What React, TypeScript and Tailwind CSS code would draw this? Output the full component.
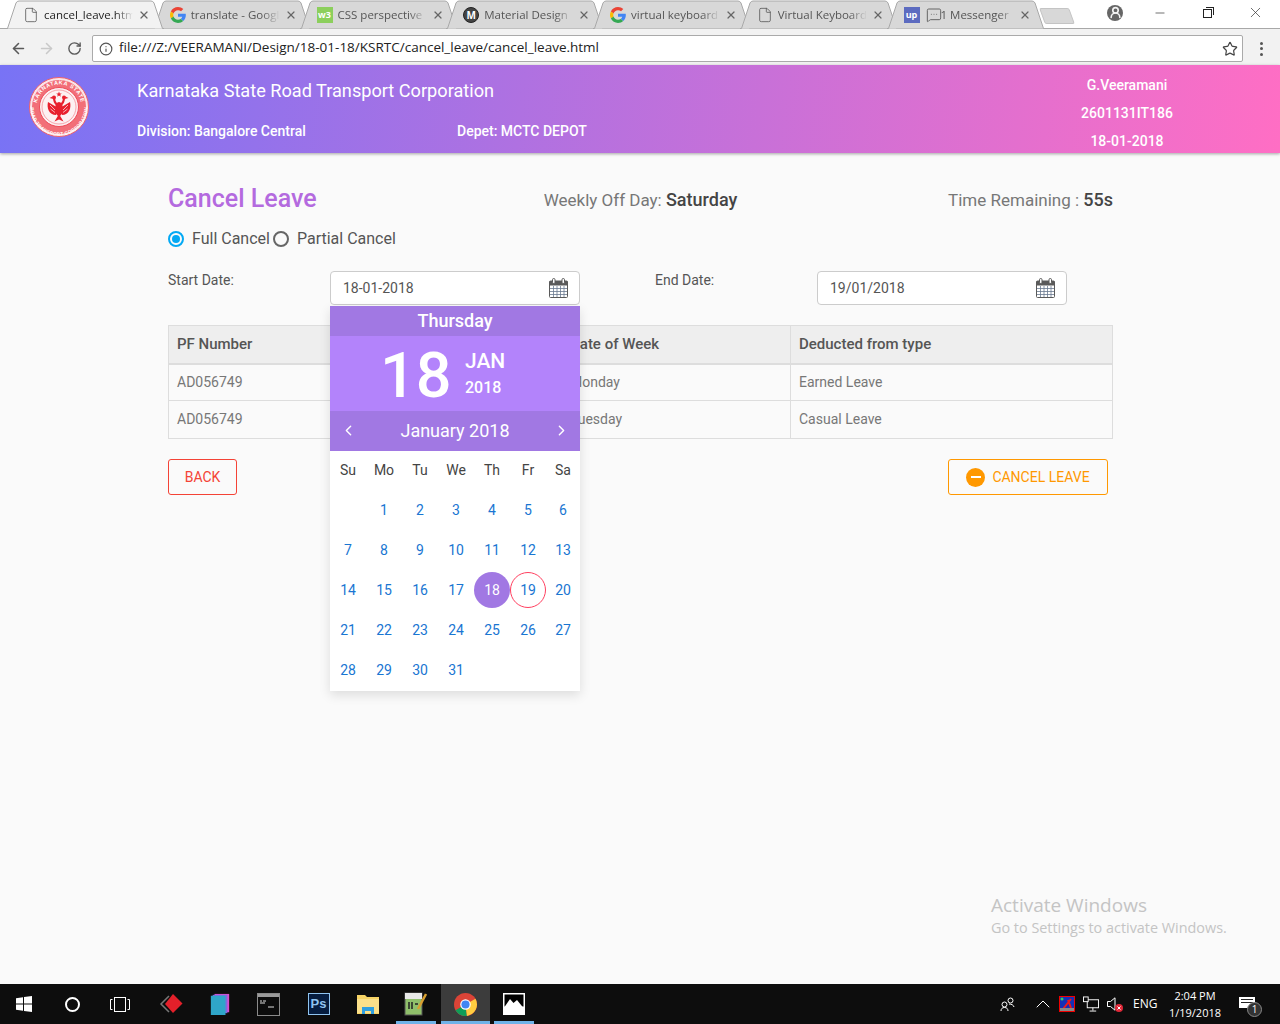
import { ArrowLeft, ArrowRight, ChevronLeft, ChevronRight, ChevronUp, File, Info, MessageSquareMore, Minus, RotateCw, Star, UserRound, X } from "lucide-react";

const UI_FONT = "font-['Open_Sans','Noto_Sans',sans-serif]";

const TABS = [
  { title: "cancel_leave.html", icon: "file", active: true },
  { title: "translate - Google", icon: "google" },
  { title: "CSS perspective", icon: "w3" },
  { title: "Material Design", icon: "material" },
  { title: "virtual keyboard", icon: "google" },
  { title: "Virtual Keyboard", icon: "file" },
  { title: "1 Messenger", icon: "up" },
];

const WEEK = ["Su", "Mo", "Tu", "We", "Th", "Fr", "Sa"];
const DAYS = [0, ...Array.from({ length: 31 }, (_, i) => i + 1)];

const ROWS = [
  { pf: "AD056749", day: "Monday", type: "Earned Leave", height: "h-[37px]" },
  { pf: "AD056749", day: "Tuesday", type: "Casual Leave", height: "h-[38px]" },
];

function GoogleIcon() {
  return (
    <svg width="16" height="16" viewBox="0 0 48 48" className="shrink-0">
      <path fill="#EA4335" d="M24 9.5c3.5 0 6.7 1.3 9.1 3.5l6.8-6.8C35.8 2.4 30.2 0 24 0 14.6 0 6.5 5.4 2.6 13.2l7.9 6.1C12.4 13.6 17.7 9.5 24 9.5z" />
      <path fill="#4285F4" d="M47.5 24.5c0-1.6-.1-3.1-.4-4.5H24v9h12.7c-.5 2.9-2.2 5.4-4.7 7.1l7.6 5.9c4.4-4.1 7.9-10.1 7.9-17.5z" />
      <path fill="#FBBC05" d="M10.5 28.7c-.5-1.4-.8-3-.8-4.7s.3-3.3.8-4.7l-7.9-6.1C.9 16.5 0 20.1 0 24s.9 7.5 2.6 10.8l7.9-6.1z" />
      <path fill="#34A853" d="M24 48c6.5 0 11.9-2.1 15.6-5.8L32 36.1c-2.1 1.4-4.8 2.3-8 2.3-6.3 0-11.6-4.2-13.5-9.8l-7.9 6.2C6.5 42.6 14.6 48 24 48z" />
    </svg>
  );
}

function TabIcon({ kind }: { kind: string }) {
  if (kind === "google") return <GoogleIcon />;
  if (kind === "file") return <File size={16} strokeWidth={1.2} className="shrink-0 text-[#555]" />;
  if (kind === "w3") {
    return <span className="w-4 h-4 shrink-0 bg-[#8ccf5c] text-white text-[9px] leading-4 text-center font-bold">w3</span>;
  }
  if (kind === "material") {
    return (
      <span className="w-4 h-4 shrink-0 rounded-full bg-[#444] border border-[#222] text-white text-[10px] leading-[14px] text-center font-bold">M</span>
    );
  }
  return (
    <>
      <span className="w-4 h-4 shrink-0 bg-[#5c6bc0] text-white text-[9px] leading-4 text-center font-bold">up</span>
      <MessageSquareMore size={16} strokeWidth={1.3} className="shrink-0 ml-[1px] -mr-[6px] text-[#555]" />
    </>
  );
}

function Tab({ title, icon, active }: { title: string; icon: string; active?: boolean }) {
  return (
    <div className={`relative w-[158px] h-[29px] shrink-0 -mr-[11.25px] ${active ? "z-10" : ""}`}>
      <svg width="158" height="29" className="absolute left-0 top-0">
        <path
          d="M0 28.5 L1.5 28.5 L10 3 Q11 1 13 1 L145 1 Q147 1 148 3 L156.5 28.5 L158 28.5"
          fill={active ? "#f2f2f2" : "#d8d8d8"}
          stroke="#a8a8a8"
        />
      </svg>
      <div className="relative flex items-center h-[29px] pl-[17px] pr-[14px] gap-[5px]">
        <TabIcon kind={icon} />
        <span className={`flex-1 overflow-hidden whitespace-nowrap text-[11.5px] [mask-image:linear-gradient(to_right,black_80%,transparent)] ${active ? "text-[#222]" : "text-[#555]"}`}>
          {title}
        </span>
        <X size={12} strokeWidth={2.4} className="shrink-0 text-[#666]" />
      </div>
    </div>
  );
}

function BrowserChrome() {
  return (
    <div className={`${UI_FONT} bg-[#f2f2f2]`}>
      <div className="relative h-[35px] bg-white pl-[6px] flex items-start">
        <div className="absolute left-0 right-0 top-[28px] h-[7px] bg-[#f2f2f2]" />
        <div className="absolute left-0 right-0 top-[28px] h-px bg-[#a8a8a8]" />
        {TABS.map((t, i) => (
          <Tab key={i} title={t.title} icon={t.icon} active={t.active} />
        ))}
        <div className="relative ml-[9px] mt-[8px] w-[30px] h-[16px] bg-[#d8d8d8] border border-[#c4c4c4] rounded-[2px] skew-x-[20deg]" />
        <div className="relative ml-auto flex items-center h-[28px] text-[#333]">
          <span className="w-[16px] h-[16px] mb-[3px] rounded-full bg-[#666] flex items-center justify-center overflow-hidden mr-[30px]">
            <UserRound size={13} strokeWidth={3} className="text-[#f3f3f3]" />
          </span>
          <Minus size={14} strokeWidth={1.2} className="mb-[3px] mr-[36px]" />
          <span className="relative w-[9px] h-[9px] border border-[#222] bg-white mb-[4px] mr-[35px] mt-[2px]">
            <span className="absolute -top-[3px] -right-[3px] w-[8px] h-[8px] border-t border-r border-[#222]" />
          </span>
          <X size={17} strokeWidth={1} className="mb-[4px] mr-[16px]" />
        </div>
      </div>
      <div className="h-[31px] flex items-center -mt-[1px] pb-[2px]">
        <ArrowLeft size={17} strokeWidth={2.2} className="ml-[10px] text-[#5a5a5a]" />
        <ArrowRight size={17} strokeWidth={2.2} className="ml-[11px] text-[#c9c9c9]" />
        <RotateCw size={15} strokeWidth={2.2} className="ml-[12px] text-[#5a5a5a]" />
        <div className="ml-[10px] w-[1151px] h-[27px] bg-white border border-[#aaa] rounded-[2px] flex items-center pl-[6px] pr-[4px]">
          <Info size={14} strokeWidth={2} className="text-[#555]" />
          <span className="ml-[6px] pb-[2px] text-[13.5px] text-[#222] whitespace-nowrap">file:///Z:/VEERAMANI/Design/18-01-18/KSRTC/cancel_leave/cancel_leave.html</span>
          <Star size={16} strokeWidth={1.8} className="ml-auto text-[#444]" />
        </div>
        <div className="ml-[17px] flex flex-col gap-[2.5px]">
          <span className="w-[3px] h-[3px] rounded-full bg-[#555]" />
          <span className="w-[3px] h-[3px] rounded-full bg-[#555]" />
          <span className="w-[3px] h-[3px] rounded-full bg-[#555]" />
        </div>
      </div>
    </div>
  );
}

function Seal() {
  return (
    <svg width="60" height="60" viewBox="0 0 60 60" className="shrink-0">
      <circle cx="30" cy="30" r="29.5" fill="#fbe4e6" stroke="#f0606a" strokeWidth="1" />
      <circle cx="30" cy="30" r="27" fill="#f26f78" />
      <circle cx="30" cy="30" r="19.5" fill="#fdf1f2" stroke="#ee4b58" strokeWidth="1" />
      <circle cx="30" cy="30" r="17" fill="none" stroke="#f26f78" strokeWidth="0.6" />
      <defs>
        <path id="sealTop" d="M7.5 30 A22.5 22.5 0 0 1 52.5 30" />
        <path id="sealBottom" d="M4.5 30 A25.5 25.5 0 0 0 55.5 30" />
      </defs>
      <text fontSize="5.5" fontWeight="700" fill="#fff" fontFamily="Liberation Sans, sans-serif" letterSpacing="0.6">
        <textPath href="#sealTop" startOffset="50%" textAnchor="middle">KARNATAKA STATE</textPath>
      </text>
      <text fontSize="4.6" fontWeight="700" fill="#fff" fontFamily="Liberation Sans, sans-serif" dominantBaseline="hanging">
        <textPath href="#sealBottom" startOffset="50%" textAnchor="middle">ROAD TRANSPORT CORPORATION</textPath>
      </text>
      <g fill="#e8202e">
        <path d="M19 25 C17.5 31 20 38 27 38 L27.5 30 Z" />
        <path d="M41 25 C42.5 31 40 38 33 38 L32.5 30 Z" />
        <ellipse cx="30" cy="32" rx="4" ry="7" />
        <path d="M30 37 L25.5 44.5 L30 42.5 L34.5 44.5 Z" />
        <circle cx="25" cy="20.5" r="2" />
        <circle cx="35" cy="20.5" r="2" />
        <path d="M23.5 19.5 L20.5 21 L23.5 21.8 Z" />
        <path d="M36.5 19.5 L39.5 21 L36.5 21.8 Z" />
        <path d="M30 14.5 L30.8 16.5 L32.8 16.5 L31.2 17.8 L31.8 19.8 L30 18.6 L28.2 19.8 L28.8 17.8 L27.2 16.5 L29.2 16.5 Z" />
      </g>
      <path d="M28 28 C26 26 25 24 25 21 M32 28 C34 26 35 24 35 21" fill="none" stroke="#e8202e" strokeWidth="2" />
      <path d="M21 28 L26 33 M39 28 L34 33 M21.5 32 L26 35.5 M38.5 32 L34 35.5" stroke="#fdf1f2" strokeWidth="0.7" />
    </svg>
  );
}

function AppHeader() {
  return (
    <header className="relative z-10 h-[88px] shrink-0 flex bg-[linear-gradient(97deg,#7873f5,#ff6ec4)] text-white shadow-[0_1px_3px_rgba(0,0,0,0.35)] font-['Roboto',sans-serif]">
      <div className="ml-[29px] mt-[12px]">
        <Seal />
      </div>
      <div className="ml-[48px] w-[800px]">
        <div className="mt-[14px] text-[18.15px] leading-[24px]">Karnataka State Road Transport Corporation</div>
        <div className="mt-[18px] flex text-[14px] leading-[20px] font-medium">
          <span className="w-[320px]">Division: Bangalore Central</span>
          <span>Depet: MCTC DEPOT</span>
        </div>
      </div>
      <div className="ml-[99px] w-[182px] pt-[6px] flex flex-col text-center text-[14px] leading-[28px] font-medium">
        <span>G.Veeramani</span>
        <span>2601131IT186</span>
        <span>18-01-2018</span>
      </div>
    </header>
  );
}

function CalendarGlyph() {
  return (
    <svg width="19" height="20" viewBox="0 0 19 20" className="shrink-0">
      <rect x="0.5" y="3" width="18" height="16.5" rx="1" fill="#fff" stroke="#5a5a5a" />
      <rect x="0.5" y="3" width="18" height="4.5" fill="#5a5a5a" />
      <path d="M1 10.5h17M1 13.5h17M1 16.5h17M4.5 8v11M8 8v11M11.5 8v11M15 8v11" stroke="#6a7a90" strokeWidth="0.8" fill="none" />
      <rect x="3.5" y="0.5" width="2.5" height="5" rx="1.2" fill="#fff" stroke="#5a5a5a" />
      <rect x="13" y="0.5" width="2.5" height="5" rx="1.2" fill="#fff" stroke="#5a5a5a" />
    </svg>
  );
}

function DateInput({ value, children }: { value: string; children?: React.ReactNode }) {
  return (
    <div className="relative w-[250px] shrink-0">
      <div className="h-[34px] bg-white border border-[#ccc] rounded-[4px] flex items-center pl-[12px] pr-[11px] text-[14px] text-[#555]">
        <span className="flex-1">{value}</span>
        <CalendarGlyph />
      </div>
      {children}
    </div>
  );
}

function DatePicker() {
  return (
    <div className="absolute z-20 left-0 top-[35px] w-[250px] h-[385px] bg-white rounded-t-[2px] shadow-[0_4px_12px_rgba(0,0,0,0.12)]">
      <div className="h-[30px] bg-[#a178e3] text-white text-center text-[18px] leading-[30px] font-medium">Thursday</div>
      <div className="h-[75px] bg-[#b383fb] text-white flex items-center pl-[50px]">
        <span className="text-[63px] leading-none font-medium w-[85px] mt-[3px]">18</span>
        <div className="flex flex-col">
          <span className="text-[21px] leading-[28px] font-medium">JAN</span>
          <span className="text-[16px] leading-[26px] font-medium">2018</span>
        </div>
      </div>
      <div className="h-[40px] bg-[#a178e3] text-white flex items-center justify-between px-[10px] pb-[2px]">
        <ChevronLeft size={17} strokeWidth={2} />
        <span className="text-[18px]">January 2018</span>
        <ChevronRight size={17} strokeWidth={2} />
      </div>
      <div className="grid grid-cols-[repeat(6,36px)_34px] text-center text-[14px]">
        {WEEK.map((d) => (
          <div key={d} className="h-[39px] leading-[38px] text-[#444]">{d}</div>
        ))}
        {DAYS.map((d, i) => (
          <div key={i} className="h-[40px] flex items-center justify-center text-[#1976d2]">
            {d === 18 ? (
              <span className="w-[36px] h-[36px] rounded-full bg-[#a178e3] text-white flex items-center justify-center">{d}</span>
            ) : d === 19 ? (
              <span className="w-[36px] h-[36px] pt-[1px] rounded-full border border-[#ff4060] flex items-center justify-center">{d}</span>
            ) : d > 0 ? (
              d
            ) : null}
          </div>
        ))}
      </div>
    </div>
  );
}

function Radio({ checked, label }: { checked?: boolean; label: string }) {
  return (
    <label className="flex items-center">
      <span className={`w-[16px] h-[16px] rounded-full border-2 flex items-center justify-center ${checked ? "border-[#03a9f4]" : "border-[#666]"}`}>
        {checked && <span className="w-[8px] h-[8px] rounded-full bg-[#03a9f4]" />}
      </span>
      <span className="ml-[8px] mr-[3px] text-[16px] text-[#555]">{label}</span>
    </label>
  );
}

function CancelLeavePage() {
  return (
    <main className="flex-1 bg-[#fafafa] font-['Roboto',sans-serif] relative">
      <div className="ml-[168px] w-[945px]">
        <div className="grid grid-cols-3 items-center pt-[29px] h-[62px]">
          <h1 className="text-[25px] leading-[32px] font-medium text-[#b46adf]">Cancel Leave</h1>
          <div className="pt-[2px] text-center text-[17px] text-[#777] whitespace-nowrap">
            Weekly Off Day: <span className="text-[18px] font-medium text-[#444]">Saturday</span>
          </div>
          <div className="pt-[2px] text-right text-[17px] text-[#777]">
            Time Remaining : <span className="text-[18px] font-medium text-[#444]">55s</span>
          </div>
        </div>
        <div className="mt-[12px] flex items-center h-[24px]">
          <Radio checked label="Full Cancel" />
          <Radio label="Partial Cancel" />
        </div>
        <div className="mt-[20px] flex items-start">
          <span className="w-[162px] -mt-px text-[14px] leading-[20px] text-[#555]">Start Date:</span>
          <DateInput value="18-01-2018">
            <DatePicker />
          </DateInput>
          <span className="ml-[75px] w-[162px] -mt-px text-[14px] leading-[20px] text-[#555]">End Date:</span>
          <DateInput value="19/01/2018" />
        </div>
        <table className="mt-[20px] w-[945px] table-fixed border-collapse text-[14px] border border-[#ddd]">
          <colgroup>
            <col className="w-[393px]" />
            <col className="w-[229px]" />
            <col />
          </colgroup>
          <thead>
            <tr className="h-[38px] bg-[#eeeeee] border-b-2 border-[#ddd] text-[#555] text-left text-[15px]">
              <th className="px-[8px] font-medium border-r border-[#ddd]">PF Number</th>
              <th className="px-[8px] font-medium border-r border-[#ddd]">Date of Week</th>
              <th className="px-[8px] font-medium">Deducted from type</th>
            </tr>
          </thead>
          <tbody className="text-[#777]">
            {ROWS.map((r) => (
              <tr key={r.day} className={`${r.height} border-t border-[#ddd]`}>
                <td className="px-[8px] border-r border-[#ddd]">{r.pf}</td>
                <td className="px-[8px] border-r border-[#ddd]">{r.day}</td>
                <td className="px-[8px]">{r.type}</td>
              </tr>
            ))}
          </tbody>
        </table>
        <div className="mt-[20px] flex justify-between pr-[5px]">
          <button className="w-[69px] h-[36px] border border-[#f44336] rounded-[3px] text-[14px] text-[#f44336]">BACK</button>
          <button className="w-[160px] h-[36px] border border-[#ff9800] rounded-[3px] text-[14px] text-[#ff9800] flex items-center justify-center gap-[7px]">
            <span className="w-[19px] h-[19px] rounded-full bg-[#ff9800] flex items-center justify-center">
              <span className="w-[10px] h-[2px] bg-white" />
            </span>
            CANCEL LEAVE
          </button>
        </div>
      </div>
      <div className={`${UI_FONT} absolute left-[991px] top-[739px] text-[#c4c4c4] pointer-events-none`}>
        <div className="text-[19px] leading-[26px]">Activate Windows</div>
        <div className="text-[14.4px] leading-[19px]">Go to Settings to activate Windows.</div>
      </div>
    </main>
  );
}

function TaskSlot({ children, active, underline }: { children: React.ReactNode; active?: boolean; underline?: boolean }) {
  return (
    <div className={`relative w-[49px] h-[40px] flex items-center justify-center ${active ? "bg-[#3c3c3c]" : ""}`}>
      {children}
      {underline && <span className={`absolute bottom-0 h-[3px] bg-[#6fb2e8] ${active ? "left-0 right-0" : "left-[4px] right-[5px]"}`} />}
    </div>
  );
}

function TaskbarApps() {
  return (
    <>
      <TaskSlot>
        <svg width="16" height="16" viewBox="0 0 16 16" fill="#fff" className="-ml-[1px]">
          <path d="M0 2.3 7 1.3V7.5H0zM8 1.1 16 0V7.5H8zM0 8.5H7V14.7L0 13.7zM8 8.5H16V16L8 14.9z" />
        </svg>
      </TaskSlot>
      <TaskSlot>
        <span className="w-[15px] h-[15px] -ml-[3px] rounded-full border-2 border-white" />
      </TaskSlot>
      <TaskSlot>
        <svg width="20" height="15" viewBox="0 0 20 15" fill="none" stroke="#fff" className="-ml-[5px]">
          <rect x="4.5" y="0.5" width="11" height="14" />
          <path d="M2.5 2.5H0.5V12.5H2.5M17.5 2.5H19.5V12.5H17.5" />
        </svg>
      </TaskSlot>
      <TaskSlot>
        <svg width="24" height="24" viewBox="0 0 24 24" className="-ml-[2px]">
          <path d="M10 4 2 12l8 8" fill="none" stroke="#777" strokeWidth="1.5" />
          <path d="M14 2 23.5 11.5 14 21 6 12z" fill="#e3202a" />
        </svg>
      </TaskSlot>
      <TaskSlot>
        <svg width="20" height="22" viewBox="0 0 20 24" className="-ml-[2px]">
          <rect x="4" y="1" width="16" height="20" fill="#d84fd0" />
          <rect x="2" y="2" width="16" height="20" fill="#7a6ee0" />
          <rect x="0" y="3" width="16" height="21" fill="#2fa6c9" />
        </svg>
      </TaskSlot>
      <TaskSlot>
        <svg width="23" height="23" viewBox="0 0 23 23" className="-ml-[2px]">
          <rect x="0.5" y="0.5" width="22" height="22" fill="#0c0c0c" stroke="#8a8a8a" />
          <rect x="1" y="1" width="21" height="3" fill="#9a9a9a" />
          <path d="M3 8h2M6 8h3M3 10h5M11 14h6" stroke="#ddd" strokeWidth="1" />
        </svg>
      </TaskSlot>
      <TaskSlot>
        <span className="w-[22px] h-[22px] bg-[#061d3f] border border-[#8fc4f0] text-[#8fc4f0] text-[13px] leading-[20px] text-center font-bold font-['Liberation_Sans',sans-serif]">Ps</span>
      </TaskSlot>
      <TaskSlot>
        <svg width="22" height="19" viewBox="0 0 22 19">
          <path d="M0 0h8l2 2h12v17H0z" fill="#f6d365" />
          <rect x="0" y="4" width="22" height="14" fill="#fbe08a" />
          <path d="M5 19v-7h12v7h-3v-3H8v3z" fill="#2f9fe0" />
        </svg>
      </TaskSlot>
      <TaskSlot underline>
        <svg width="23" height="24" viewBox="0 0 23 24" className="-ml-[2px]">
          <rect x="1" y="1" width="17" height="22" fill="#8fbf6a" stroke="#555" />
          <rect x="1" y="1" width="17" height="6" fill="#e8e8e8" />
          <path d="M5 10v7M8 10v7M11 12h3" stroke="#222" strokeWidth="1.5" />
          <path d="M22 2 14 17" stroke="#d8a030" strokeWidth="2.5" />
        </svg>
      </TaskSlot>
      <TaskSlot active underline>
        <svg width="23" height="23" viewBox="0 0 48 48">
          <circle cx="24" cy="24" r="24" fill="#db4437" />
          <path d="M24 24 3.2 36A24 24 0 0 0 24 48c1 0 2-.1 3-.2z" fill="#0f9d58" />
          <path d="M24 24 44.8 12A24 24 0 0 1 27 47.8z" fill="#ffcd40" />
          <circle cx="24" cy="24" r="11" fill="#fff" />
          <circle cx="24" cy="24" r="8.5" fill="#4285f4" />
        </svg>
      </TaskSlot>
      <TaskSlot underline>
        <svg width="22" height="22" viewBox="0 0 22 22" className="-ml-[1px]">
          <rect width="22" height="22" fill="#fff" />
          <rect x="1.5" y="1.5" width="19" height="12" fill="#000" />
          <path d="M1.5 14 7 6l3.5 4L14 7l6.5 8v5.5h-19z" fill="#fff" />
        </svg>
      </TaskSlot>
    </>
  );
}

function Taskbar() {
  return (
    <footer className={`${UI_FONT} h-[40px] shrink-0 bg-[#0d0d0d] flex items-center text-white`}>
      <TaskbarApps />
      <div className="ml-auto flex items-center h-[40px]">
        <svg width="15" height="15" viewBox="0 0 15 15" fill="none" stroke="#fff" className="mr-[16px]">
          <circle cx="4.5" cy="7.5" r="2.5" />
          <circle cx="10.5" cy="3.5" r="2.5" />
          <path d="M1 14c0-2 1-3.5 3.5-3.5S8 12 8 14M9 7c2.5 0 4.5 1 5 3" />
        </svg>
        <ChevronUp size={24} strokeWidth={1} className="mr-[4px]" />
        <svg width="16" height="16" viewBox="0 0 16 16" className="mr-[8px]">
          <rect x="0.5" y="0.5" width="15" height="15" fill="#1430b8" stroke="#f00000" />
          <circle cx="3" cy="3" r="1.5" fill="#30d060" />
          <path d="M4 13 12 3M9 4l3 8" stroke="#f01818" strokeWidth="2" />
          <rect x="1" y="12" width="14" height="3" fill="#888" />
        </svg>
        <svg width="16" height="16" viewBox="0 0 17 16" fill="none" stroke="#fff" className="mr-[8px]">
          <rect x="4.5" y="3.5" width="12" height="8.5" />
          <rect x="0.5" y="0.5" width="5" height="5" fill="#0d0d0d" />
          <path d="M10.5 12v3M7 15.5h7" />
        </svg>
        <svg width="16" height="16" viewBox="0 0 16 16" className="mr-[10px]">
          <path d="M0.5 5.5h3L8 1.8v12.4L3.5 10.5h-3z" fill="none" stroke="#fff" />
          <circle cx="12" cy="12" r="4" fill="#e02838" />
          <path d="M10.5 10.5l3 3M13.5 10.5l-3 3" stroke="#fff" strokeWidth="1" />
        </svg>
        <span className="text-[12px] w-[24px]">ENG</span>
        <div className="w-[60px] ml-[8px] pb-[1px] text-center text-[11px] leading-[17px]">
          <div>2:04 PM</div>
          <div>1/19/2018</div>
        </div>
        <span className="relative w-[16px] h-[14px] ml-[14px] mr-[25px]">
          <span className="flex flex-col gap-[2px] pt-[2px] px-[2px] w-[16px] h-[11px] bg-white">
            <span className="h-px bg-[#222]" />
            <span className="h-px bg-[#222]" />
          </span>
          <span className="absolute -right-[7px] -bottom-[6px] w-[15px] h-[15px] rounded-full bg-[#333] border border-[#888] text-[10px] leading-[13px] text-center">1</span>
        </span>
      </div>
    </footer>
  );
}

export default function App() {
  return (
    <div className="w-[1280px] h-[1024px] flex flex-col overflow-hidden">
      <BrowserChrome />
      <AppHeader />
      <CancelLeavePage />
      <Taskbar />
    </div>
  );
}
